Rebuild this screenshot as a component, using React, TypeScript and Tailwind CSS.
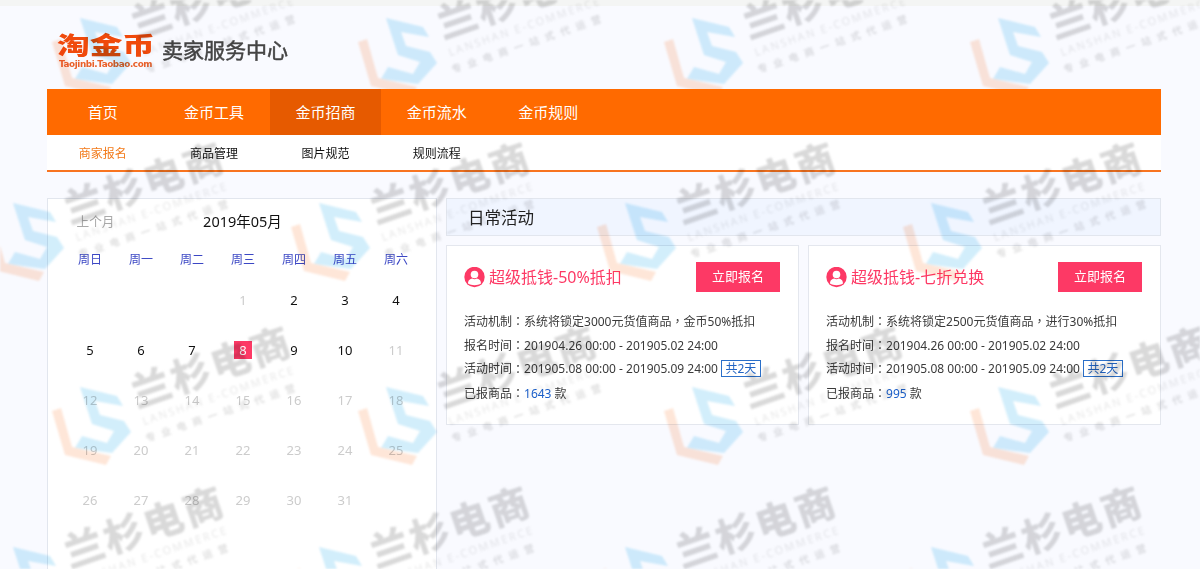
import clsx from 'clsx';

const navItems = ['首页', '金币工具', '金币招商', '金币流水', '金币规则'];
const subNavItems = ['商家报名', '商品管理', '图片规范', '规则流程'];
const weekDays = ['周日', '周一', '周二', '周三', '周四', '周五', '周六'];

const TODAY = 8;
const OPEN_DAYS = [2, 3, 4, 5, 6, 7, 9, 10];

// May 2019 starts on a Wednesday
const days: (number | null)[] = [null, null, null, ...Array.from({ length: 31 }, (_, i) => i + 1)];

const activities = [
  {
    title: '超级抵钱-50%抵扣',
    rule: ['系统将锁定3000元货值商品', '金币50%抵扣'],
    signup: '201904.26 00:00 - 201905.02 24:00',
    period: '201905.08 00:00 - 201905.09 24:00',
    duration: '共2天',
    count: 1643,
  },
  {
    title: '超级抵钱-七折兑换',
    rule: ['系统将锁定2500元货值商品', '进行30%抵扣'],
    signup: '201904.26 00:00 - 201905.02 24:00',
    period: '201905.08 00:00 - 201905.09 24:00',
    duration: '共2天',
    count: 995,
  },
];

const stampRows = [
  { x: 80, y: 18 },
  { x: 13, y: 203 },
  { x: 80, y: 387 },
  { x: 13, y: 547 },
];

function Watermark() {
  return (
    <svg
      className="absolute inset-0 pointer-events-none mix-blend-multiply blur-[1.2px]"
      width="1200"
      height="569"
      viewBox="0 0 1200 569"
    >
      <defs>
        <g id="stamp">
          <path
            d="M0 0 L37 9 L43 19 L15 14 L20 28 L44 34 L51 45 L32 66 L-5 61 L2 49 L27 56 L34 44 L12 37 Z"
            fill="#d2eefb"
          />
          <path d="M-28 24 L-19 21 L-8 60 L31 69 L26 78 L-15 68 Z" fill="#fee6d8" />
          <g transform="translate(132 -20) rotate(-19)" textAnchor="middle">
            <text y="14" fontSize="39" fontWeight="700" letterSpacing="3" fill="#d9d9d9" stroke="#d9d9d9" strokeWidth="0.8">
              兰杉电商
            </text>
            <text x="-3" y="33" fontSize="11" letterSpacing="2" fill="#e9e9e9">
              LANSHAN E-COMMERCE
            </text>
            <text x="-4" y="50" fontSize="10" fontWeight="700" letterSpacing="6.4" fill="#e0e0e0">
              专业电商一站式代运营
            </text>
          </g>
        </g>
      </defs>
      {stampRows.map((row) =>
        [0, 1, 2, 3, 4].map((col) => (
          <use key={`${row.y}-${col}`} href="#stamp" x={row.x + (col - (row.x < 50 ? 1 : 0)) * 306} y={row.y} />
        ))
      )}
    </svg>
  );
}

function UserIcon() {
  return (
    <svg className="w-[21px] h-[21px] shrink-0" viewBox="0 0 21 21">
      <circle cx="10.5" cy="10" r="10.2" fill="#fd3965" />
      <circle cx="10.5" cy="7.5" r="3.8" fill="#fff" />
      <path d="M4 16.6 C4 13.1 6 12 8.2 11.5 C9.6 12.4 11.4 12.4 12.8 11.5 C15 12 17 13.1 17 16.6 C13.5 18.8 7.5 18.8 4 16.6 Z" fill="#fff" />
    </svg>
  );
}

// Full-width punctuation, centred in its box
function Punct({ children }: { children: string }) {
  return <span className="font-['Noto_Sans_CJK_TC',sans-serif]" lang="zh-TW">{children}</span>;
}

function Calendar() {
  return (
    <div className="w-[390px] h-[420px] bg-white border border-[#e2e6ee] pl-[16.5px]">
      <div className="relative h-[46px] w-[356px] flex items-center justify-center text-[#111]">
        <span className="absolute left-3 text-[12.7px] text-[#aaa]">上个月</span>
        <span className="text-[14.5px]">2019年05月</span>
      </div>
      <div className="grid grid-cols-7 w-[357px] h-[30px] items-center text-center text-[12px] text-[#3b47c4]">
        {weekDays.map((day) => (
          <span key={day}>{day}</span>
        ))}
      </div>
      <div className="grid grid-cols-7 w-[357px] auto-rows-[50px] text-[13px]">
        {days.map((day, i) => (
          <div key={i} className="flex items-center justify-center">
            {day && (
              <span
                className={clsx(
                  'w-[18px] h-[18px] leading-[19px] flex justify-center',
                  day === TODAY && 'bg-[#fd3965] text-white',
                  day !== TODAY && (OPEN_DAYS.includes(day) ? 'text-[#111]' : 'text-[#ccc]')
                )}
              >
                {day}
              </span>
            )}
          </div>
        ))}
      </div>
    </div>
  );
}

function ActivityCard({ activity }: { activity: (typeof activities)[number] }) {
  return (
    <div className="w-[353px] h-[180px] bg-white border border-[#e4e7ee] pt-4 pl-[17px] pr-[18px]">
      <div className="flex items-center h-[30px]">
        <UserIcon />
        <h3 className="ml-1 text-base text-[#fd3965]">{activity.title}</h3>
        <button type="button" className="ml-auto w-[84px] h-[30px] bg-[#fd3965] text-[13px] text-white">
          立即报名
        </button>
      </div>

      <div className="mt-[17px] grid auto-rows-[24px] text-[12px] leading-6 text-[#3a3a3a] whitespace-nowrap">
        <p>
          活动机制<Punct>：</Punct>
          {activity.rule[0]}
          <Punct>，</Punct>
          {activity.rule[1]}
        </p>
        <p>
          报名时间<Punct>：</Punct>
          {activity.signup}
        </p>
        <p className="flex items-center">
          活动时间<Punct>：</Punct>
          {activity.period}
          <span className="ml-[3px] -mt-px h-[17px] px-[3.5px] border border-[#2a6fc9] leading-[16px] text-[#2265c4]">
            {activity.duration}
          </span>
        </p>
        <p>
          已报商品<Punct>：</Punct>
          <span className="text-[#1a5fcb]">{activity.count}</span> 款
        </p>
      </div>
    </div>
  );
}

export default function App() {
  return (
    <div className="relative w-[1200px] h-[569px] overflow-hidden bg-[#f9faff] font-['Noto_Sans','Noto_Sans_CJK_SC',sans-serif]">
      <div className="h-1.5 bg-[#f4f5f4]" />

      <div className="w-[1114px] ml-[47px]">
        {/* Logo */}
        <header className="h-[83px] flex pl-[10px] pt-[26px]">
          <div className="w-[105px]">
            <div className="h-[27px] w-[81px] origin-left scale-x-[1.36] text-[24px] leading-[26px] font-black text-[#f04a0c] whitespace-nowrap">
              淘金币
            </div>
            <div className="ml-[2px] pt-px text-[8.8px] leading-[9px] font-bold text-[#e9602a] font-['DejaVu_Sans',sans-serif] tracking-[-0.4px] whitespace-nowrap">
              Taojinbi.Taobao.com
            </div>
          </div>
          <div className="pt-[5px] text-[21px] leading-[27px] text-[#444] [-webkit-text-stroke:0.5px_#444]">
            卖家服务中心
          </div>
        </header>

        {/* Main nav */}
        <nav className="relative z-10 h-[46px] flex bg-[#ff6a00] text-[15px] text-white">
          {navItems.map((item) => (
            <a
              key={item}
              className={clsx('w-1/10 flex items-center justify-center', item === '金币招商' && 'bg-[#e65a00]')}
            >
              {item}
            </a>
          ))}
        </nav>
        <nav className="h-[37px] pt-[3px] mb-[26px] flex bg-white border-b-2 border-[#f87420] text-[12px] text-[#111]">
          {subNavItems.map((item, i) => (
            <a key={item} className={clsx('w-1/10 flex items-center justify-center', i === 0 && 'text-[#f27a1a]')}>
              {item}
            </a>
          ))}
        </nav>

        <main className="flex gap-[9px]">
          <Calendar />
          <div className="w-[715px]">
            <h2 className="h-[38px] flex items-center pt-0.5 pl-[21px] bg-[#f0f5ff] border border-[#e2e6ee] text-[16.5px] text-[#222]">
              日常活动
            </h2>
            <div className="mt-[9px] flex gap-[9px]">
              {activities.map((activity) => (
                <ActivityCard key={activity.title} activity={activity} />
              ))}
            </div>
          </div>
        </main>
      </div>

      <Watermark />
    </div>
  );
}
